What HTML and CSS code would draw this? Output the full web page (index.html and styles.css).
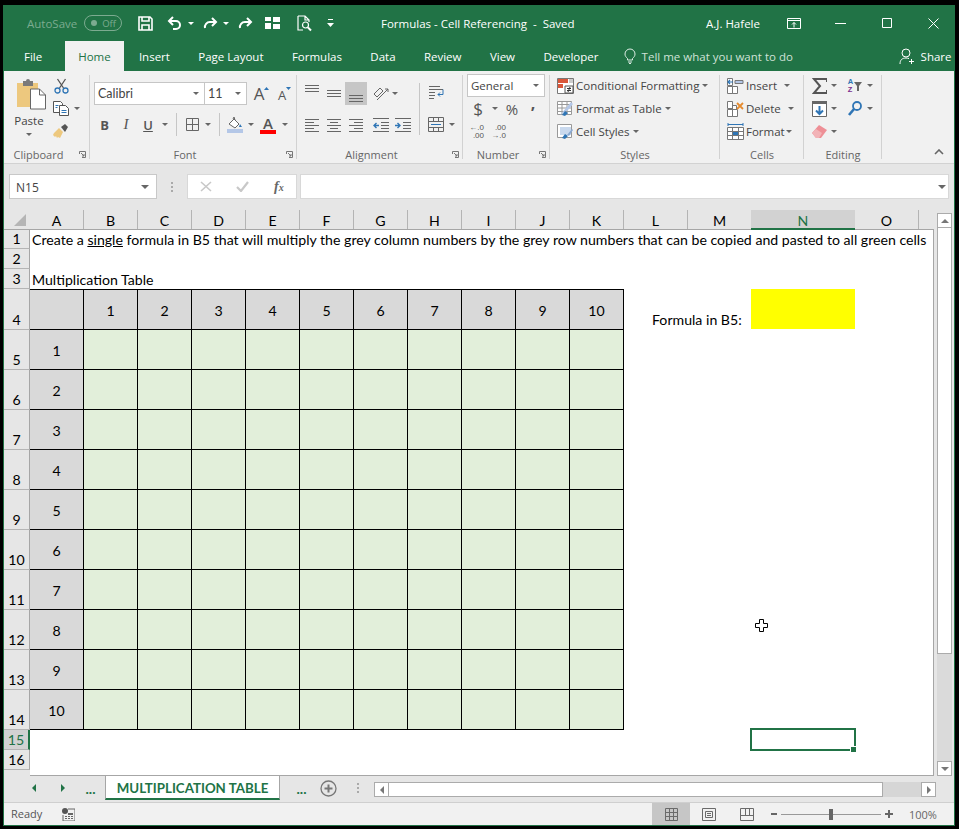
FILE: index.html
```html
<!DOCTYPE html>
<html lang="en">
<head>
  <meta charset="UTF-8">
  <title>Formulas - Cell Referencing - Saved</title>
  <link rel="stylesheet" href="styles.css">
</head>
<body>
<div class="app">

  <div class="titlebar">
    <span class="autosave">AutoSave</span>
    <span class="toggle"><i></i>Off</span>
    <svg class="qa-save" width="15" height="15" viewBox="0 0 15 15" fill="none" stroke="#fff" stroke-width="1.6"><path d="M1 1h11l2 2v11H1z"/><path d="M4 1v4h7V1M4 14V9h7v5"/></svg>
    <svg class="qa-undo" width="15" height="14" viewBox="0 0 15 14" fill="none" stroke="#fff" stroke-width="2"><path d="M6 1L2 5l4 4"/><path d="M2 5h7a4 4 0 0 1 0 8H6"/></svg>
    <span class="caret white qa-c1"></span>
    <svg class="qa-redo" width="15" height="12" viewBox="0 0 15 12" fill="none" stroke="#fff" stroke-width="2"><path d="M9 1l4 4-4 4"/><path d="M13 5H7a5 5 0 0 0-5 6"/></svg>
    <span class="caret white qa-c2"></span>
    <svg class="qa-redo2" width="15" height="12" viewBox="0 0 15 12" fill="none" stroke="#fff" stroke-width="2"><path d="M9 1l4 4-4 4"/><path d="M13 5H7a5 5 0 0 0-5 6"/></svg>
    <svg class="qa-grid" width="15" height="12" viewBox="0 0 15 12" fill="#fff"><path d="M0 0h6v4H0zM8 0h7v5H8zM0 6h6v6H0zM8 7h7v5H8z"/></svg>
    <svg class="qa-prev" width="15" height="17" viewBox="0 0 15 17" fill="none" stroke="#fff" stroke-width="1.2"><path d="M1 1h7l4 4v2M8 1v4h4M1 1v14h5"/><circle cx="8.5" cy="10" r="3"/><path stroke-width="2" d="M11 12.5l3 3"/></svg>
    <svg class="qa-more" width="7" height="8" viewBox="0 0 7 8" fill="#fff"><path d="M1 0h5v1H1zM0 4h7L3.500 8z"/></svg>
    <span class="doc-title">Formulas - Cell Referencing &nbsp;- &nbsp;Saved</span>
    <span class="user">A.J. Hafele</span>
    <svg class="win-ribbon" width="14" height="11" viewBox="0 0 14 11" fill="none" stroke="#fff"><path d="M.5.500h13v10H.500zM.5 2.500h13M7 9.500V4.500M5 6.500l2-2 2 2"/></svg>
    <svg class="win-min" width="11" height="1" viewBox="0 0 11 1"><path d="M0 0h11v1H0z" fill="#fff"/></svg>
    <svg class="win-max" width="10" height="10" viewBox="0 0 10 10" fill="none" stroke="#fff"><path d="M.5.500h9v9h-9z"/></svg>
    <svg class="win-close" width="11" height="11" viewBox="0 0 11 11" fill="none" stroke="#fff"><path d="M.5.500l10 10M10.500.500l-10 10"/></svg>
  </div>

  <div class="tabbar">
    <span class="tab file">File</span>
    <span class="tab active">Home</span>
    <span class="tab">Insert</span>
    <span class="tab">Page Layout</span>
    <span class="tab">Formulas</span>
    <span class="tab">Data</span>
    <span class="tab">Review</span>
    <span class="tab">View</span>
    <span class="tab">Developer</span>
    <svg class="bulb" width="12" height="16" viewBox="0 0 12 16" fill="none" stroke="#dfeee6"><path d="M3.500 10.500C2 9 1 8 1 6a5 5 0 0 1 10 0c0 2-1 3-2.500 4.500v1.500h-5zM4 14h4M5 15.500h2"/></svg>
    <span class="tellme">Tell me what you want to do</span>
    <svg class="share-ico" width="16" height="17" viewBox="0 0 16 17" fill="none" stroke="#fff"><circle cx="7" cy="5" r="4"/><path d="M1 16c0-4 2-6 6-6 1 0 2 .2 3 .6M12.500 11v5M10 13.500h5"/></svg>
    <span class="share">Share</span>
  </div>

  <div class="ribbon">

    <div class="group g-clip">
      <div class="gbody flexrow">
        <div class="paste">
          <svg width="29" height="31" viewBox="0 0 29 31"><path d="M0 4h21v24H0z" fill="#edc87e"/><path d="M6 2h3a2 2 0 0 1 4 0h3v5H6z" fill="#7a7a7a"/><path d="M13.500 10h9l6 6v14h-15z" fill="#fff" stroke="#666"/><path d="M22.500 10v6h6" fill="none" stroke="#666"/></svg>
          <span class="paste-label">Paste</span>
          <span class="caret"></span>
        </div>
        <div class="stack">
          <div class="row">
            <span class="btn w22"><svg width="15" height="16" viewBox="0 0 15 16" fill="none"><path d="M3.500 1l6 9M11.500 1l-6 9" stroke="#555" stroke-width="1.300"/><circle cx="3.500" cy="12.500" r="2.500" stroke="#2f75b5" stroke-width="1.300"/><circle cx="11.500" cy="12.500" r="2.500" stroke="#2f75b5" stroke-width="1.300"/></svg></span>
          </div>
          <div class="row">
            <span class="btn w22"><svg width="16" height="15" viewBox="0 0 16 15" fill="#fff" stroke="#555"><path d="M.5.500h7l2 2v9h-9z"/><path d="M6.500 4.500h6l3 3v7h-9z"/><path d="M2.500 4.500h3M2.500 6.500h2M8.500 9.500h5M8.500 11.500h5" stroke="#2f75b5"/></svg></span>
            <span class="btn w10"><span class="caret"></span></span>
          </div>
          <div class="row">
            <span class="btn w22"><svg width="16" height="15" viewBox="0 0 16 15"><path d="M1 9l5-5 4 4-3 6-2-1-1 1-1-2-1 1-2-2z" fill="#edc87e"/><path d="M8 3l4-3 3 3-3 5z" fill="#555"/></svg></span>
          </div>
        </div>
      </div>
      <div class="glabel"><span>Clipboard</span><svg class="launch" width="7" height="7" viewBox="0 0 7 7" fill="none" stroke="#777"><path d="M.5 3V.500H6.500V6.500H3M2 2l3 3M5 3v2H3"/></svg></div>
    </div>

    <div class="group g-font">
      <div class="gbody pad-wide">
        <div class="row">
          <span class="combo w110 calibri">Calibri<span class="caret"></span></span>
          <span class="combo w42 calibri">11<span class="caret"></span></span>
          <span class="btn w25 grow-a"><span class="big-a">A</span><svg width="5" height="3" viewBox="0 0 5 3"><path d="M0 3l2.500-3L5 3z" fill="#2f75b5"/></svg></span>
          <span class="btn w21 shrink-a"><span class="small-a">A</span><svg width="5" height="3" viewBox="0 0 5 3"><path d="M0 0l2.500 3L5 0z" fill="#2f75b5"/></svg></span>
        </div>
        <div class="row row-gap">
          <span class="btn w21 fmt bold">B</span>
          <span class="btn w22 fmt ital">I</span>
          <span class="btn w22 fmt under">U</span>
          <span class="btn w12"><span class="caret"></span></span>
          <span class="vsep w11"></span>
          <span class="btn w20"><svg width="13" height="13" viewBox="0 0 13 13" fill="none" stroke="#666"><path d="M.5.500h12v12H.500zM6.500.500v12M.5 6.500h12"/></svg></span>
          <span class="btn w12"><span class="caret"></span></span>
          <span class="vsep w11"></span>
          <span class="btn w20 paint"><svg width="16" height="16" viewBox="0 0 16 16"><path d="M2 7l5-5 5 5-4 4z" fill="#fff" stroke="#666"/><path d="M6 2l1-2 1 3" fill="none" stroke="#666"/><path d="M13 7l2 3h-3z" fill="#2f75b5"/><path d="M0 12h16v4H0z" fill="#b4c7e7"/></svg></span>
          <span class="btn w12"><span class="caret"></span></span>
          <span class="btn w22 font-color"><span>A</span><i></i></span>
          <span class="btn w12"><span class="caret"></span></span>
        </div>
      </div>
      <div class="glabel"><span>Font</span><svg class="launch" width="7" height="7" viewBox="0 0 7 7" fill="none" stroke="#777"><path d="M.5 3V.500H6.500V6.500H3M2 2l3 3M5 3v2H3"/></svg></div>
    </div>

    <div class="group g-align">
      <div class="gbody flexrow pad-align">
        <div class="align-main">
          <div class="row">
            <span class="btn w22"><svg width="14" height="23" viewBox="0 0 14 23" stroke="#666"><path d="M0 3.500h14M0 6.500h14M0 9.500h14"/></svg></span>
            <span class="btn w22"><svg width="14" height="23" viewBox="0 0 14 23" stroke="#666"><path d="M0 8.500h14M0 11.500h14M0 14.500h14"/></svg></span>
            <span class="btn w22 pressed"><svg width="14" height="23" viewBox="0 0 14 23" stroke="#666"><path d="M0 13.500h14M0 16.500h14M0 19.500h14"/></svg></span>
            <span class="btn w22 ml3"><svg width="17" height="15" viewBox="0 0 17 15" fill="none" stroke="#666"><path d="M1 8l6-6 3 3-6 6zM4 14L15 3M15 3h-3M15 3v3"/></svg></span>
            <span class="btn w6"><span class="caret"></span></span>
          </div>
          <div class="row row-gap">
            <span class="btn w22"><svg width="14" height="14" viewBox="0 0 14 14" stroke="#666"><path d="M0 1.500h14M0 4.500h9M0 7.500h14M0 10.500h9M0 13.500h14"/></svg></span>
            <span class="btn w22"><svg width="14" height="14" viewBox="0 0 14 14" stroke="#666"><path d="M0 1.500h14M3 4.500h8M0 7.500h14M3 10.500h8M0 13.500h14"/></svg></span>
            <span class="btn w22"><svg width="14" height="14" viewBox="0 0 14 14" stroke="#666"><path d="M0 1.500h14M5 4.500h9M0 7.500h14M5 10.500h9M0 13.500h14"/></svg></span>
            <span class="btn w22 ml3"><svg width="16" height="14" viewBox="0 0 16 14" fill="none" stroke="#666"><path d="M0 .5h16M8 4.500h8M8 7.500h8M8 10.500h8M0 13.500h16"/><path d="M6 7.500H1M3.500 5L1 7.500 3.500 10" stroke="#2f75b5" stroke-width="1.400"/></svg></span>
            <span class="btn w22"><svg width="16" height="14" viewBox="0 0 16 14" fill="none" stroke="#666"><path d="M0 .5h16M8 4.500h8M8 7.500h8M8 10.500h8M0 13.500h16"/><path d="M0 7.500h5M2.500 5L5 7.500 2.500 10" stroke="#2f75b5" stroke-width="1.400"/></svg></span>
          </div>
        </div>
        <span class="vsep tall"></span>
        <div class="align-wrap">
          <div class="row">
            <span class="btn w22"><svg width="16" height="15" viewBox="0 0 16 15" fill="none" stroke="#666"><path d="M1 .5h11M1 3.500h14M1 6.500h6M1 9.500h6M1 12.500h5"/><path d="M15 3.500v5h-5M12 6.500l-2 2 2 2" stroke="#2f75b5"/></svg></span>
          </div>
          <div class="row row-gap">
            <span class="btn w22"><svg width="16" height="15" viewBox="0 0 16 15" fill="none" stroke="#666"><path d="M.5.500h15v14H.500zM.5 4.500h15M.5 10.500h15M5.500.5v4M10.500.5v4M5.500 10.500v4M10.500 10.500v4"/><path d="M3 7.500h10" stroke="#2f75b5"/></svg></span>
            <span class="btn w10"><span class="caret"></span></span>
          </div>
        </div>
      </div>
      <div class="glabel"><span>Alignment</span><svg class="launch" width="7" height="7" viewBox="0 0 7 7" fill="none" stroke="#777"><path d="M.5 3V.500H6.500V6.500H3M2 2l3 3M5 3v2H3"/></svg></div>
    </div>

    <div class="group g-num">
      <div class="gbody pad-narrow">
        <div class="row"><span class="combo w78">General<span class="caret"></span></span></div>
        <div class="row">
          <span class="btn w22 sym dollar">$</span>
          <span class="btn w12"><span class="caret"></span></span>
          <span class="btn w22 sym pct">%</span>
          <span class="btn w20 sym comma">,</span>
        </div>
        <div class="row dec-row">
          <span class="dec"><b>←.0</b><b>.00</b></span>
          <span class="dec"><b>.00</b><b>→.0</b></span>
        </div>
      </div>
      <div class="glabel"><span>Number</span><svg class="launch" width="7" height="7" viewBox="0 0 7 7" fill="none" stroke="#777"><path d="M.5 3V.500H6.500V6.500H3M2 2l3 3M5 3v2H3"/></svg></div>
    </div>

    <div class="group g-styles">
      <div class="gbody pad-list">
        <div class="row item"><svg width="17" height="16" viewBox="0 0 17 16"><path d="M.5.500h16v15H.500z" fill="#fff" stroke="#777"/><path d="M1 1h10v4H1z" fill="#d9573a"/><path d="M1 6h5v4H1z" fill="#d9573a"/><path d="M12 1h4v4h-4z" fill="#ccc"/><path d="M8 8h8v7H8z" fill="#fff" stroke="#555"/><path d="M10 10.500h4M10 12.500h4M13 9l-2 5" stroke="#333" fill="none"/></svg><span>Conditional Formatting</span><span class="caret"></span></div>
        <div class="row item"><svg width="17" height="16" viewBox="0 0 17 16"><path d="M.5.500h14v13H.500zM.5 3.500h14M.5 7h14M.5 10.500h14M5 .5v13M10 .5v13" fill="#fff" stroke="#999"/><path d="M3 14l6-7 5-6 2 2-5 6z" fill="#b4c7e7"/><path d="M5 14l3-4 3 2-3 3z" fill="#2f75b5"/></svg><span>Format as Table</span><span class="caret"></span></div>
        <div class="row item"><svg width="17" height="16" viewBox="0 0 17 16"><path d="M.5.500h14v13H.500z" fill="#fff" stroke="#999"/><path d="M3 3h11v8H3z" fill="#c9d9ee"/><path d="M5 14l3-4 3 2-3 3z" fill="#2f75b5"/><path d="M10 11l5-6 1 1-4 6z" fill="#8aa9d2"/></svg><span>Cell Styles</span><span class="caret"></span></div>
      </div>
      <div class="glabel"><span>Styles</span></div>
    </div>

    <div class="group g-cells">
      <div class="gbody pad-list">
        <div class="row item"><svg width="17" height="16" viewBox="0 0 17 16" fill="#fff" stroke="#777"><path d="M.5 8.500h5v7h-5zM5.500 8.500h5v7h-5zM.5.500h5v7h-5z"/><path d="M8 2.500h8v3H8z" fill="#b4c7e7"/><path d="M6 4H1M3 2L1 4l2 2" fill="none" stroke="#2f75b5" stroke-width="1.200"/></svg><span class="w-ins">Insert</span><span class="caret"></span></div>
        <div class="row item"><svg width="17" height="16" viewBox="0 0 17 16" fill="#fff" stroke="#777"><path d="M.5 8.500h5v7h-5zM5.500 8.500h5v7h-5zM.5.500h5v7h-5zM5.500 4.500h4v4h-4z"/><path d="M10 2l6 6M16 2l-6 6" stroke="#e58b2e" stroke-width="1.800"/></svg><span class="w-del">Delete</span><span class="caret"></span></div>
        <div class="row item"><svg width="17" height="17" viewBox="0 0 17 17" fill="#fff" stroke="#777"><path d="M.5 4.500h16v12H.500zM.5 8.500h16M.5 12.500h16M5.500 4.500v12M11.500 4.500v12"/><path d="M6 9h5v3H6z" fill="#2f75b5" stroke="none"/><path d="M1 1.500h15M1 0v3M16 0v3" stroke="#2f75b5" fill="none"/></svg><span class="w-fmt">Format</span><span class="caret"></span></div>
      </div>
      <div class="glabel"><span>Cells</span></div>
    </div>

    <div class="group g-edit">
      <div class="gbody pad-edit">
        <div class="row">
          <span class="btn w22"><svg width="15" height="16" viewBox="0 0 15 16" fill="none" stroke="#555" stroke-width="2"><path d="M15 4V1H2l6 7-6 7h13v-3"/></svg></span>
          <span class="btn w8"><span class="caret"></span></span>
          <span class="btn w22 ml6 sort"><span class="az"><b class="a">A</b><b class="z">Z</b></span><svg width="8" height="9" viewBox="0 0 8 9"><path d="M0 0h8L5 4v5H3V4z" fill="#666"/></svg></span>
          <span class="btn w8"><span class="caret"></span></span>
        </div>
        <div class="row">
          <span class="btn w22"><svg width="15" height="16" viewBox="0 0 15 16"><path d="M.5.500h14v15H.500z" fill="#fff" stroke="#666"/><path d="M0 0h15v3H0z" fill="#666"/><path d="M7.500 5v8M4 9.500l3.500 3.500L11 9.500" fill="none" stroke="#2f75b5" stroke-width="2"/></svg></span>
          <span class="btn w8"><span class="caret"></span></span>
          <span class="btn w22 ml6"><svg width="14" height="15" viewBox="0 0 14 15" fill="none" stroke="#2f75b5" stroke-width="1.800"><circle cx="9" cy="5" r="4"/><path d="M6 8l-5 6" stroke-width="2.600"/></svg></span>
          <span class="btn w8"><span class="caret"></span></span>
        </div>
        <div class="row">
          <span class="btn w22"><svg width="15" height="13" viewBox="0 0 15 13"><path d="M0 8l7-8 8 5-6 8H4z" fill="#ee8f96"/><path d="M0 8l4-4 6 4-3 5H4z" fill="#f2b3b7"/></svg></span>
          <span class="btn w8"><span class="caret"></span></span>
        </div>
      </div>
      <div class="glabel"><span>Editing</span></div>
    </div>

    <div class="collapse"><svg width="10" height="6" viewBox="0 0 10 6" fill="none" stroke="#666" stroke-width="1.600"><path d="M1 5l4-4 4 4"/></svg></div>
  </div>

  <div class="formulabar">
    <div class="namebox"><span>N15</span><span class="caret"></span></div>
    <div class="fb-dots"><i></i><i></i><i></i></div>
    <div class="fx-box">
      <svg width="12" height="11" viewBox="0 0 12 11" fill="none" stroke="#c8c8c8" stroke-width="1.600"><path d="M1 1l10 9M11 1L1 10"/></svg>
      <svg width="13" height="11" viewBox="0 0 13 11" fill="none" stroke="#c8c8c8" stroke-width="2.200"><path d="M1 6l4 4 7-9"/></svg>
      <span class="fx">f<small>x</small></span>
    </div>
    <div class="fb-input"><span class="caret"></span></div>
  </div>

  <div class="sheet">
    <div class="sheet-left">
      <div class="colhead">
        <div class="corner"><svg width="12" height="12" viewBox="0 0 12 12"><path d="M12 0v12H0z" fill="#b5b5b5"/></svg></div>
        <div class="col">A</div><div class="col">B</div><div class="col">C</div><div class="col">D</div><div class="col">E</div><div class="col">F</div><div class="col">G</div><div class="col">H</div><div class="col">I</div><div class="col">J</div><div class="col">K</div>
        <div class="col col-l">L</div><div class="col col-m">M</div><div class="col col-n">N</div><div class="col col-l">O</div>
      </div>
      <div class="main">
        <div class="rowhead">
          <div class="rh rh-1">1</div><div class="rh">2</div><div class="rh">3</div>
          <div class="rh rh-4">4</div><div class="rh tall">5</div><div class="rh tall">6</div><div class="rh tall">7</div><div class="rh tall">8</div><div class="rh tall">9</div><div class="rh tall">10</div><div class="rh tall">11</div><div class="rh tall">12</div><div class="rh tall">13</div><div class="rh tall">14</div>
          <div class="rh rh-active">15</div><div class="rh">16</div>
        </div>
        <div class="cells">
          <div class="line line-1">Create a <u>single</u> formula in B5 that will multiply the grey column numbers by the grey row numbers that can be copied and pasted to all green cells</div>
          <div class="line"></div>
          <div class="line">Multiplication Table</div>
          <div class="grid-wrap">
            <table class="mult">
              <tr><th></th><th>1</th><th>2</th><th>3</th><th>4</th><th>5</th><th>6</th><th>7</th><th>8</th><th>9</th><th>10</th></tr>
              <tr><th>1</th><td></td><td></td><td></td><td></td><td></td><td></td><td></td><td></td><td></td><td></td></tr>
              <tr><th>2</th><td></td><td></td><td></td><td></td><td></td><td></td><td></td><td></td><td></td><td></td></tr>
              <tr><th>3</th><td></td><td></td><td></td><td></td><td></td><td></td><td></td><td></td><td></td><td></td></tr>
              <tr><th>4</th><td></td><td></td><td></td><td></td><td></td><td></td><td></td><td></td><td></td><td></td></tr>
              <tr><th>5</th><td></td><td></td><td></td><td></td><td></td><td></td><td></td><td></td><td></td><td></td></tr>
              <tr><th>6</th><td></td><td></td><td></td><td></td><td></td><td></td><td></td><td></td><td></td><td></td></tr>
              <tr><th>7</th><td></td><td></td><td></td><td></td><td></td><td></td><td></td><td></td><td></td><td></td></tr>
              <tr><th>8</th><td></td><td></td><td></td><td></td><td></td><td></td><td></td><td></td><td></td><td></td></tr>
              <tr><th>9</th><td></td><td></td><td></td><td></td><td></td><td></td><td></td><td></td><td></td><td></td></tr>
              <tr><th>10</th><td></td><td></td><td></td><td></td><td></td><td></td><td></td><td></td><td></td><td></td></tr>
            </table>
            <div class="side">
              <div class="side-label">Formula in B5:</div>
              <div class="side-fill"></div>
            </div>
          </div>
          <div class="selection"><i></i></div>
          <svg class="cursor" width="13" height="13" viewBox="0 0 13 13"><path d="M4.500.5h4v4h4v4h-4v4h-4v-4h-4v-4h4z" fill="#fff" stroke="#000"/></svg>
        </div>
      </div>
    </div>
    <div class="vscroll">
      <div class="sbtn"><span class="tri-up"></span></div>
      <div class="vthumb"></div>
      <div class="vtrack"></div>
      <div class="sbtn"><span class="tri-down"></span></div>
    </div>
  </div>

  <div class="sheettabs">
    <span class="nav"><i class="tri-left green"></i></span>
    <span class="nav"><i class="tri-right green"></i></span>
    <span class="more">...</span>
    <span class="sheet-tab">MULTIPLICATION TABLE</span>
    <span class="more after">...</span>
    <svg class="add" width="17" height="17" viewBox="0 0 17 17" fill="none" stroke="#777" stroke-width="1.300"><circle cx="8.500" cy="8.500" r="7.500"/><path stroke-width="2" d="M8.500 4.500v8M4.500 8.500h8"/></svg>
    <div class="fb-dots tabs-dots"><i></i><i></i><i></i></div>
    <div class="hscroll">
      <span class="sbtn h"><i class="tri-left"></i></span>
      <span class="hthumb"></span>
      <span class="htrack"></span>
      <span class="sbtn h"><i class="tri-right"></i></span>
    </div>
  </div>

  <div class="statusbar">
    <span class="ready">Ready</span>
    <svg class="macro" width="13" height="13" viewBox="0 0 13 13"><circle cx="3" cy="3" r="3" fill="#555"/><path d="M6 1h7v12H1V7" fill="none" stroke="#666"/><path d="M3 8h2v1H3zM6 8h2v1H6zM9 8h2v1H9zM3 10h2v1H3zM6 10h2v1H6zM9 10h2v1H9zM6 5h5v2H6z" fill="#666"/></svg>
    <div class="view active"><svg width="13" height="13" viewBox="0 0 13 13" fill="none" stroke="#6a6a6a"><path d="M.5.500h12v12H.500zM4.500.5v12M8.500.5v12M.5 4.500h12M.5 8.500h12"/></svg></div>
    <div class="view"><svg width="14" height="13" viewBox="0 0 14 13" fill="none" stroke="#6a6a6a"><path d="M.5.500h13v12H.500zM3.500 3.500h7v6h-7zM5 5.500h4M5 7.500h4"/></svg></div>
    <div class="view"><svg width="14" height="13" viewBox="0 0 14 13" fill="none" stroke="#6a6a6a"><path d="M.5.500h13v12H.500zM.5 7.500h13M5.500.5v7M9.500.5v7" /></svg></div>
    <div class="zoom">
      <span class="zbtn minus"></span>
      <div class="slider"><i></i></div>
      <span class="zbtn plus"></span>
      <span class="pct-text">100%</span>
    </div>
  </div>
</div>
</body>
</html>
```

FILE: styles.css
```css
* { box-sizing: border-box; margin: 0; padding: 0; }

html, body { height: 100%; }

body {
  background: #000;
  padding: 5px 4px 3px 3px;
  font-family: "Open Sans", sans-serif;
  font-size: 11.500px;
  color: #444;
  overflow: hidden;
}

.app {
  width: 952px;
  height: 821px;
  display: flex;
  flex-direction: column;
  border: 1px solid #217346;
  border-top: 0;
  background: #e6e6e6;
}

/* carets */
.caret {
  display: inline-block;
  width: 0;
  height: 0;
  border-left: 3px solid transparent;
  border-right: 3px solid transparent;
  border-top: 3px solid #666;
}
.caret.white { border-top-color: #fff; }

/* title bar */
.titlebar {
  height: 36px;
  flex: none;
  background: #217346;
  color: #fff;
  display: flex;
  align-items: center;
}
.autosave { margin-left: 23px; width: 57px; color: #7cab90; font-size: 11.500px; }
.toggle {
  width: 38px;
  height: 16px;
  border: 1px solid #7cab90;
  border-radius: 8px;
  color: #7cab90;
  font-size: 9.500px;
  display: flex;
  align-items: center;
  justify-content: flex-end;
  padding-right: 5px;
}
.toggle i { width: 6px; height: 6px; border-radius: 50%; background: #7cab90; margin-right: 5px; }
.qa-save { margin-left: 16px; }
.qa-undo { margin-left: 14px; }
.qa-c1 { margin-left: 6px; }
.qa-redo { margin-left: 9px; }
.qa-c2 { margin-left: 5px; }
.qa-redo2 { margin-left: 9px; }
.qa-grid { margin-left: 12px; }
.qa-prev { margin-left: 17px; }
.qa-more { margin-left: 15px; }
.doc-title { margin-left: 47px; width: 325px; font-size: 11.500px; white-space: nowrap; }
.user { width: 81px; font-size: 11.500px; }
.win-min { margin-left: 34px; }
.win-max { margin-left: 36px; }
.win-close { margin-left: 36px; }

/* ribbon tabs */
.tabbar {
  height: 30px;
  flex: none;
  background: #217346;
  color: #fff;
  display: flex;
  align-items: stretch;
}
.tab { padding: 0 14.200px; display: flex; align-items: center; white-space: nowrap; }
.tab.file { padding: 0 23px 0 20px; }
.tab.active { background: #f1f1f1; color: #217346; padding: 0 13px; margin-right: 1px; }
.bulb { align-self: center; margin-left: 11px; }
.tellme { align-self: center; margin-left: 6px; width: 257px; color: #cfe2d7; white-space: nowrap; }
.share-ico { align-self: center; }
.share { align-self: center; margin-left: 6px; }

/* ribbon */
.ribbon {
  height: 93px;
  flex: none;
  background: #f1f1f1;
  border-bottom: 1px solid #d2d2d2;
  display: flex;
  align-items: stretch;
}
.group {
  display: flex;
  flex-direction: column;
  position: relative;
}
.group::after {
  content: "";
  position: absolute;
  right: 0;
  top: 4px;
  bottom: 4px;
  width: 1px;
  background: #d2d2d2;
}
.gbody { flex: 1; }
.flexrow { display: flex; }
.g-clip { width: 86px; }
.g-font { width: 207px; }
.g-align { width: 166px; }
.g-num { width: 87px; }
.g-styles { width: 170px; }
.g-cells { width: 84px; }
.g-edit { width: 78px; }

.glabel {
  height: 16px;
  display: flex;
  align-items: center;
  color: #666;
  font-size: 11px;
  line-height: 14px;
}
.glabel span { flex: 1; text-align: center; }
.launch { margin: 0 4px 2px 6px; flex: none; }

.row { display: flex; align-items: center; height: 23px; }
.row-gap { margin-top: 8px; }
.btn { display: inline-flex; align-items: center; justify-content: center; height: 23px; flex: none; }
.w6 { width: 6px; }
.w8 { width: 8px; }
.w10 { width: 10px; }
.w12 { width: 12px; }
.w20 { width: 20px; }
.w21 { width: 21px; }
.w22 { width: 22px; }
.w25 { width: 25px; }
.ml3 { margin-left: 3px; }
.ml6 { margin-left: 6px; }
.pressed { background: #c6c6c6; }

.vsep { display: flex; justify-content: center; height: 23px; flex: none; }
.vsep::before { content: ""; width: 1px; background: #c6c6c6; }
.vsep.tall { width: 11px; height: 52px; margin-top: 1px; }
.w11 { width: 11px; }

/* clipboard */
.paste {
  width: 50px;
  display: flex;
  flex-direction: column;
  align-items: center;
  padding-top: 8px;
  flex: none;
}
.paste svg { margin-left: 5px; }
.paste-label { margin-top: 3px; line-height: 16px; }
.paste .caret { margin-top: 4px; }
.stack { padding-top: 3px; margin-left: -4px; }

/* font */
.pad-wide { padding: 11px 0 0 4px; }
.pad-align { padding: 11px 0 0 4px; }
.combo {
  height: 23px;
  background: #fff;
  border: 1px solid #c6c6c6;
  display: inline-flex;
  align-items: center;
  justify-content: space-between;
  padding: 0 5px 0 3px;
  flex: none;
  color: #444;
}
.calibri { font-family: Lato, sans-serif; font-size: 12.500px; }
.w110 { width: 111px; }
.w42 { width: 43px; margin-left: -1px; }
.w78 { width: 78px; }
.big-a { font-size: 17px; color: #555; line-height: 17px; }
.small-a { font-size: 13px; color: #555; line-height: 13px; margin-top: 3px; }
.grow-a { margin-left: 2px; }
.grow-a svg, .shrink-a svg { align-self: flex-start; margin-top: 5px; }
.fmt { font-size: 13px; color: #555; }
.bold { font-weight: 700; }
.ital { font-style: italic; font-family: "Liberation Serif", serif; font-size: 15px; }
.under { text-decoration: underline; font-weight: 600; }
.font-color { flex-direction: column; font-size: 15px; color: #555; font-weight: 600; line-height: 14px; }
.font-color i { width: 16px; height: 4px; background: #f00; }

/* number */
.pad-narrow { padding: 3px 0 0 4px; }
.sym { font-size: 16px; color: #555; }
.dollar { font-size: 17px; }
.pct { font-size: 15px; }
.comma { font-weight: 700; padding-bottom: 12px; }
.dec-row { gap: 8px; padding-left: 3px; }
.dec {
  display: flex;
  flex-direction: column;
  width: 14px;
  font-family: "Liberation Sans", sans-serif;
  font-size: 8px;
  line-height: 8px;
  color: #555;
  align-items: flex-end;
}
.dec b { font-weight: 400; white-space: nowrap; }

/* lists */
.pad-list { padding: 3px 0 0 7px; }
.item { gap: 2px; white-space: nowrap; }
.item .caret { margin-left: 1px; }
.w-ins { width: 35px; }
.w-del { width: 39px; }
.w-fmt { width: 37px; }

/* editing */
.pad-edit { padding: 3px 0 0 4px; }
.az { display: flex; flex-direction: column; font-family: "Liberation Sans", sans-serif; font-size: 7.500px; line-height: 8px; }
.az b { font-weight: 700; }
.az .a { color: #2f75b5; }
.az .z { color: #7b2f8e; }
.sort svg { margin: 2px 0 0 1px; }

.collapse { margin-left: auto; align-self: flex-end; padding: 0 10px 5px 0; }

/* formula bar */
.formulabar {
  height: 46px;
  flex: none;
  display: flex;
  align-items: flex-start;
  padding: 10px 5px 0 5px;
}
.namebox {
  width: 148px;
  height: 25px;
  background: #fff;
  border: 1px solid #c8c8c8;
  display: flex;
  align-items: center;
  justify-content: space-between;
  padding: 1px 7px 0 6px;
  font-size: 12px;
}
.namebox .caret, .fb-input .caret { border-width: 4px 4px 0; }
.fb-dots { width: 30px; height: 25px; display: flex; flex-direction: column; align-items: center; justify-content: center; gap: 2px; }
.fb-dots i { width: 2px; height: 2px; background: #aaa; }
.fx-box {
  width: 110px;
  height: 25px;
  background: #fff;
  border: 1px solid #d8d8d8;
  display: flex;
  align-items: center;
  justify-content: space-between;
  padding: 0 12px;
}
.fx { font-family: "Liberation Serif", serif; font-style: italic; font-weight: 700; font-size: 14px; color: #666; }
.fx small { font-size: 10px; }
.fb-input {
  width: 650px;
  height: 25px;
  margin-left: 3px;
  background: #fff;
  border: 1px solid #d8d8d8;
  display: flex;
  align-items: center;
  justify-content: flex-end;
  padding-right: 2px;
}

/* sheet */
.sheet { height: 566px; flex: none; display: flex; }
.sheet-left { width: 930px; display: flex; flex-direction: column; font-family: Lato, sans-serif; font-size: 14.130px; color: #000; }
.colhead { height: 20px; flex: none; display: flex; border-bottom: 1px solid #a6a6a6; }
.corner { width: 26px; display: flex; align-items: flex-end; justify-content: flex-end; padding: 0 4px 3px 0; }
.col {
  width: 54px;
  border-right: 1px solid #b4b4b4;
  text-align: center;
  line-height: 21px;
}
.col-l { width: 64px; }
.col-m { width: 63px; border-right: 0; }
.col-n { width: 104px; background: #d2d2d2; color: #217346; border-bottom: 2px solid #217346; border-right: 0; height: 20px; }

.main { flex: 1; display: flex; min-height: 0; }
.rowhead { width: 26px; flex: none; overflow: hidden; }
.rh {
  height: 20px;
  border-bottom: 1px solid #b4b4b4;
  border-right: 1px solid #a6a6a6;
  display: flex;
  align-items: flex-end;
  justify-content: center;
  line-height: 18px;
}
.rh-1 { height: 19px; }
.rh-4 { height: 41px; }
.rh.tall { height: 40px; }
.rh-active { background: #d2d2d2; color: #217346; border-right: 2px solid #217346; }

.cells {
  flex: 1;
  background: #fff;
  border-right: 1px solid #a6a6a6;
  border-bottom: 1px solid #a6a6a6;
  position: relative;
  overflow: hidden;
}
.line { height: 20px; line-height: 20px; padding: 1px 0 0 2px; white-space: nowrap; }
.line-1 { height: 19px; padding-top: 0; }
.grid-wrap { display: flex; align-items: flex-start; }
.mult {
  border-collapse: separate;
  border-spacing: 0;
  table-layout: fixed;
  width: 594px;
  border-top: 1px solid #000;
}
.mult th, .mult td {
  width: 54px;
  height: 40px;
  padding-top: 1px;
  border-right: 1px solid #000;
  border-bottom: 1px solid #000;
  text-align: center;
  font-weight: 400;
  background: #e2efda;
}
.mult th { background: #d9d9d9; }
.side { display: flex; align-items: flex-end; height: 40px; }
.side-label { width: 127px; padding: 0 11px 0 28px; line-height: 19px; white-space: nowrap; }
.side-fill { width: 104px; height: 40px; background: #ff0; }

.selection {
  position: absolute;
  left: 720px;
  top: 498px;
  width: 106px;
  height: 23px;
  border: 2px solid #217346;
}
.selection i {
  position: absolute;
  right: -2px;
  bottom: -3px;
  width: 6px;
  height: 6px;
  background: #217346;
  border: 1px solid #fff;
  border-width: 1px 0 0 1px;
}
.cursor { position: absolute; left: 725px; top: 389px; }

/* scrollbars */
.vscroll { width: 15px; margin-left: 3px; padding-top: 3px; display: flex; flex-direction: column; }
.sbtn { display: flex; align-items: center; justify-content: center; width: 15px; height: 15px; background: #fff; border: 1px solid #ababab; flex: none; }
.vthumb { height: 426px; background: #fff; border: 1px solid #ababab; border-top: 0; flex: none; }
.vtrack { flex: 1; background: #dadada; }
.tri-up { border-left: 4px solid transparent; border-right: 4px solid transparent; border-bottom: 4px solid #777; }
.tri-down { border-left: 4px solid transparent; border-right: 4px solid transparent; border-top: 4px solid #777; }
.tri-left { border-top: 4px solid transparent; border-bottom: 4px solid transparent; border-right: 4px solid #777; }
.tri-right { border-top: 4px solid transparent; border-bottom: 4px solid transparent; border-left: 4px solid #777; }
.tri-left.green { border-right-color: #217346; }
.tri-right.green { border-left-color: #217346; }

/* sheet tabs */
.sheettabs { height: 27px; flex: none; display: flex; align-items: flex-start; border-bottom: 1px solid #cfcfcf; font-family: Lato, sans-serif; }
.nav { width: 29px; height: 24px; display: flex; align-items: center; justify-content: center; }
.nav:first-child { margin-left: 15px; }
.more { width: 27px; height: 24px; text-align: center; color: #217346; font-weight: 700; font-size: 14px; line-height: 26px; }
.sheet-tab {
  width: 175px;
  height: 24px;
  margin-left: 1px;
  background: #fff;
  border: 1px solid #a6a6a6;
  border-top: 0;
  border-bottom: 2px solid #217346;
  color: #217346;
  font-weight: 700;
  font-size: 13.300px;
  text-align: center;
  line-height: 24px;
  white-space: nowrap;
}
.more.after { margin-left: 8px; }
.add { margin: 4px 0 0 5px; }
.tabs-dots { width: 41px; height: 24px; }
.hscroll { margin-top: 6px; margin-left: -4px; display: flex; width: 562px; height: 15px; }
.sbtn.h { width: 15px; }
.hthumb { width: 495px; background: #fff; border: 1px solid #ababab; border-left: 0; }
.htrack { width: 38px; background: #d6d6d6; }

/* status bar */
.statusbar { height: 22px; flex: none; background: #f1f1f1; display: flex; align-items: center; }
.ready { margin-left: 7px; width: 51px; padding-bottom: 2px; font-size: 11px; color: #555; }
.macro { flex: none; }
.view { width: 38px; height: 22px; display: flex; align-items: center; justify-content: center; }
.view.active { margin-left: 577px; background: #c6c6c6; }
.zoom { display: flex; align-items: center; margin-left: 5px; }
.zbtn { position: relative; width: 8px; height: 2px; background: #666; }
.minus { width: 6px; }
.plus::before { content: ""; position: absolute; left: 3px; top: -3px; width: 2px; height: 8px; background: #666; }
.slider { width: 100px; height: 1px; background: #999; margin: 0 4px; display: flex; justify-content: center; align-items: center; }
.slider i { width: 4px; height: 11px; background: #666; flex: none; }
.pct-text { margin-left: 16px; color: #666; font-size: 11px; }
```
